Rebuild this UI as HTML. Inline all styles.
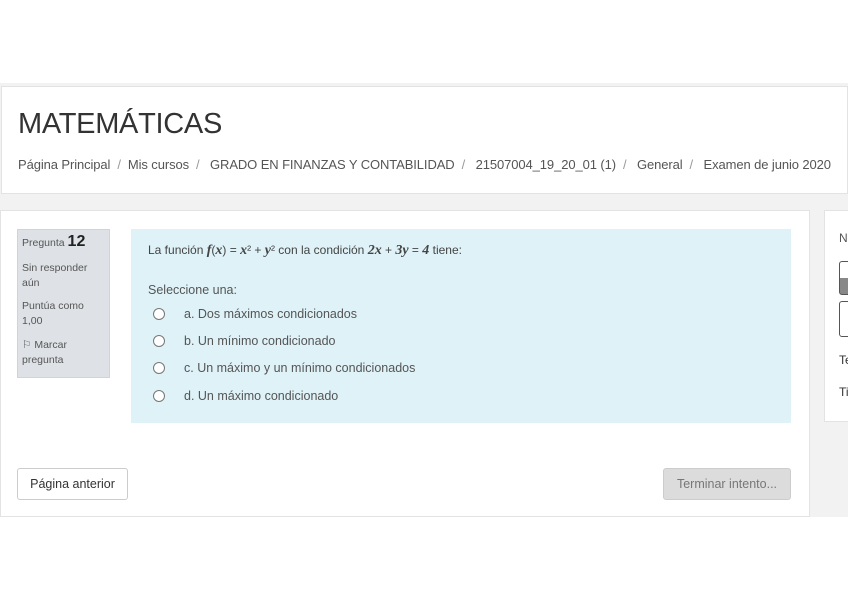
<!DOCTYPE html>
<html><head><meta charset="utf-8"><style>
*{margin:0;padding:0;box-sizing:border-box}
body{width:848px;height:599px;background:#fff;font-family:"Liberation Sans",sans-serif;color:#333;position:relative;overflow:hidden}
.abs{position:absolute}
.band{left:0;top:83px;width:848px;height:434px;background:#f2f2f2}
.hdr{left:1px;top:86px;width:847px;height:108px;background:#fff;border:1px solid #e3e3e3}
h1{position:absolute;left:18px;top:108px;font-weight:normal;font-size:29px;color:#333;letter-spacing:-0.3px}
.bc{left:18px;top:157px;font-size:13px;color:#555;white-space:nowrap;letter-spacing:-0.1px}
.bc span{color:#999;margin:0 7px}
.main{left:0;top:210px;width:810px;height:307px;background:#fff;border:1px solid #e3e3e3}
.info{left:17px;top:229px;width:93px;height:149px;background:#dee2e6;border:1px solid #ced4da;font-size:10.5px;padding:4px 14px 4px 4px;line-height:15px;color:#555}
.info b{font-size:16px;color:#222}
.q{left:131px;top:229px;width:660px;height:194px;background:#def2f8}
.q .t{position:absolute;left:17px;top:14px;font-size:12px;color:#444}
.q i{font-family:"Liberation Serif",serif;font-size:14px;font-weight:bold}
.sel{position:absolute;left:17px;top:54px;font-size:12.5px;color:#555}
.opt{position:absolute;left:22px;font-size:12.5px;color:#555}
.opt::before{content:"";position:absolute;left:0;top:1px;width:10px;height:10px;border:1px solid #777;border-radius:50%;background:#fff}
.opt span{margin-left:31px}
.btn{top:468px;height:32px;font-size:12.5px;border-radius:3px;line-height:30px;text-align:center}
.right{left:824px;top:210px;width:30px;height:212px;background:#fff;border:1px solid #e3e3e3;font-size:12px}
</style></head><body>
<div class="abs band"></div>
<div class="abs hdr"></div>
<h1>MATEMÁTICAS</h1>
<div class="abs bc">Página Principal<span>/</span>Mis cursos<span>/</span> GRADO EN FINANZAS Y CONTABILIDAD<span>/</span> 21507004_19_20_01 (1)<span>/</span> General<span>/</span> Examen de junio 2020</div>
<div class="abs main"></div>
<div class="abs info">Pregunta <b>12</b><div style="margin-top:10px">Sin responder aún</div><div style="margin-top:8px">Puntúa como 1,00</div><div style="margin-top:9px">⚐ Marcar pregunta</div></div>
<div class="abs q">
<div class="t">La función <i>f</i>(<i>x</i>) = <i>x</i>² + <i>y</i>² con la condición <i>2x</i> + <i>3y</i> = <i>4</i> tiene:</div>
<div class="sel">Seleccione una:</div>
<div class="opt" style="top:78px"><span>a. Dos máximos condicionados</span></div>
<div class="opt" style="top:105px"><span>b. Un mínimo condicionado</span></div>
<div class="opt" style="top:132px"><span>c. Un máximo y un mínimo condicionados</span></div>
<div class="opt" style="top:160px"><span>d. Un máximo condicionado</span></div>
</div>
<div class="abs btn" style="left:17px;width:111px;border:1px solid #ccc;background:#fff;color:#333">Página anterior</div>
<div class="abs btn" style="left:663px;width:128px;border:1px solid #ccc;background:#dcdcdc;color:#777">Terminar intento...</div>
<div class="abs right">
<div style="position:absolute;left:14px;top:20px;color:#555">N</div>
<div style="position:absolute;left:14px;top:50px;width:20px;height:34px;border:1px solid #555;border-radius:3px;background:linear-gradient(#fff 50%,#888 50%)"></div>
<div style="position:absolute;left:14px;top:90px;width:20px;height:36px;border:1px solid #555;border-radius:3px"></div>
<div style="position:absolute;left:14px;top:142px">Te</div>
<div style="position:absolute;left:14px;top:174px">Ti</div>
</div>
</body></html>
